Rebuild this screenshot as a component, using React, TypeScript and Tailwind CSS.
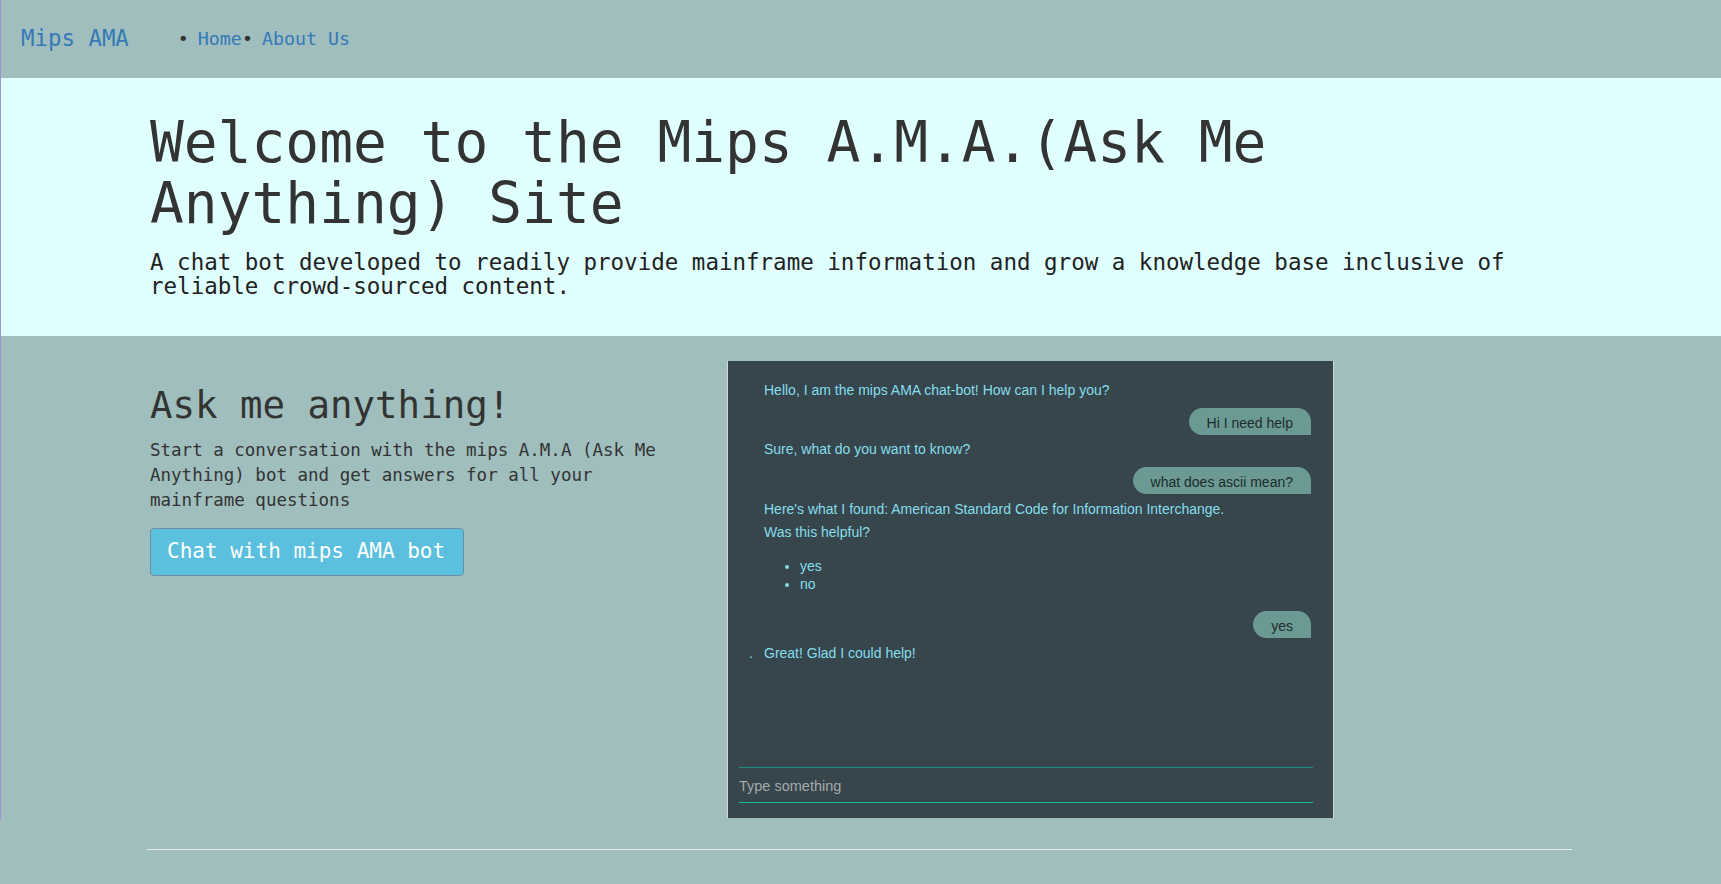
import React from "react";

const mono = "font-['DejaVu_Sans_Mono',monospace]";

function BotLine({ text, className = "" }: { text: string; className?: string }) {
  return (
    <p className={"pl-[36px] text-[14px] leading-[18px] text-[#84dfea] " + className}>
      {text}
    </p>
  );
}

function UserBubble({ text, className = "" }: { text: string; className?: string }) {
  return (
    <div className={"flex justify-end pr-[22px] " + className}>
      <span className="rounded-t-[14px] rounded-bl-[14px] bg-[#6a9a93] px-[18px] pt-[6px] pb-[3px] text-[14px] leading-[18px] text-[#1f2b2c]">
        {text}
      </span>
    </div>
  );
}

function ChatPanel() {
  return (
    <div className="flex h-[457px] w-[607px] flex-col border-x border-[#cfd8d8] bg-[#37454c] font-['Liberation_Sans',Arial,sans-serif]">
      <div className="flex-1 pt-[20px]">
        <BotLine text="Hello, I am the mips AMA chat-bot! How can I help you?" />
        <UserBubble text="Hi I need help" className="mt-[9px]" />
        <BotLine text="Sure, what do you want to know?" className="mt-[5px]" />
        <UserBubble text="what does ascii mean?" className="mt-[9px]" />
        <BotLine
          text="Here's what I found: American Standard Code for Information Interchange."
          className="mt-[6px]"
        />
        <BotLine text="Was this helpful?" className="mt-[5px]" />
        <ul className="mt-[16px] list-disc pl-[72px] text-[14px] leading-[18px] text-[#84dfea]">
          <li>yes</li>
          <li>no</li>
        </ul>
        <UserBubble text="yes" className="mt-[18px]" />
        <div className="mt-[6px] flex text-[14px] leading-[18px] text-[#84dfea]">
          <span className="w-[36px] pl-[21px]">.</span>
          <span>Great! Glad I could help!</span>
        </div>
      </div>
      <div className="ml-[11px] mr-[20px] mb-[15px] border-y border-t-[#1e8c80] border-b-[#10bca2]">
        <div className="flex h-[34px] items-center pt-[3px] text-[14.5px] text-[#a3aaac]">
          Type something
        </div>
      </div>
    </div>
  );
}

export default function App() {
  return (
    <div className={"min-h-screen bg-[#a0bebd] text-[#333] " + mono}>
      <div className="border-l border-[#9b93df]">
        <header className="flex h-[78px] items-center pl-[20px]">
          <a className="text-[22.4px] text-[#337ab7]">Mips AMA</a>
          <ul className="ml-[49px] flex text-[18.3px] text-[#337ab7]">
            <li className="flex">
              <span className="w-[20px] text-[#333]">•</span>
              <a>Home</a>
            </li>
            <li className="flex">
              <span className="w-[20px] text-[#333]">•</span>
              <a>About Us</a>
            </li>
          </ul>
        </header>

        <section className="bg-[#e0ffff] pt-[34px] pb-[38px] pl-[149px]">
          <div className="w-[1420px]">
            <h1 className="text-[56.2px] leading-[61px]">
              Welcome to the Mips A.M.A.(Ask Me Anything) Site
            </h1>
            <p className="mt-[16px] text-[22.5px] leading-[24px] text-[#222]">
              A chat bot developed to readily provide mainframe information and grow a
              knowledge base inclusive of reliable crowd-sourced content.
            </p>
          </div>
        </section>

        <main className="flex pt-[25px] pb-[2px] pl-[149px]">
          <div className="w-[577px]">
            <div className="w-[520px]">
              <h2 className="mt-[24px] text-[37.4px] leading-[40px]">Ask me anything!</h2>
              <p className="mt-[13px] text-[17.5px] leading-[25px]">
                Start a conversation with the mips A.M.A (Ask Me Anything) bot and get
                answers for all your mainframe questions
              </p>
              <button className="mt-[15px] h-[48px] w-[314px] rounded-[4px] border border-[#6b8fa0] bg-[#5bc0de] text-left pl-[16px] text-[21px] text-white">
                Chat with mips AMA bot
              </button>
            </div>
          </div>
          <ChatPanel />
        </main>
      </div>
      <hr className="ml-[147px] mt-[29px] w-[1425px] border-0 border-t border-[#e8ecec]" />
    </div>
  );
}
